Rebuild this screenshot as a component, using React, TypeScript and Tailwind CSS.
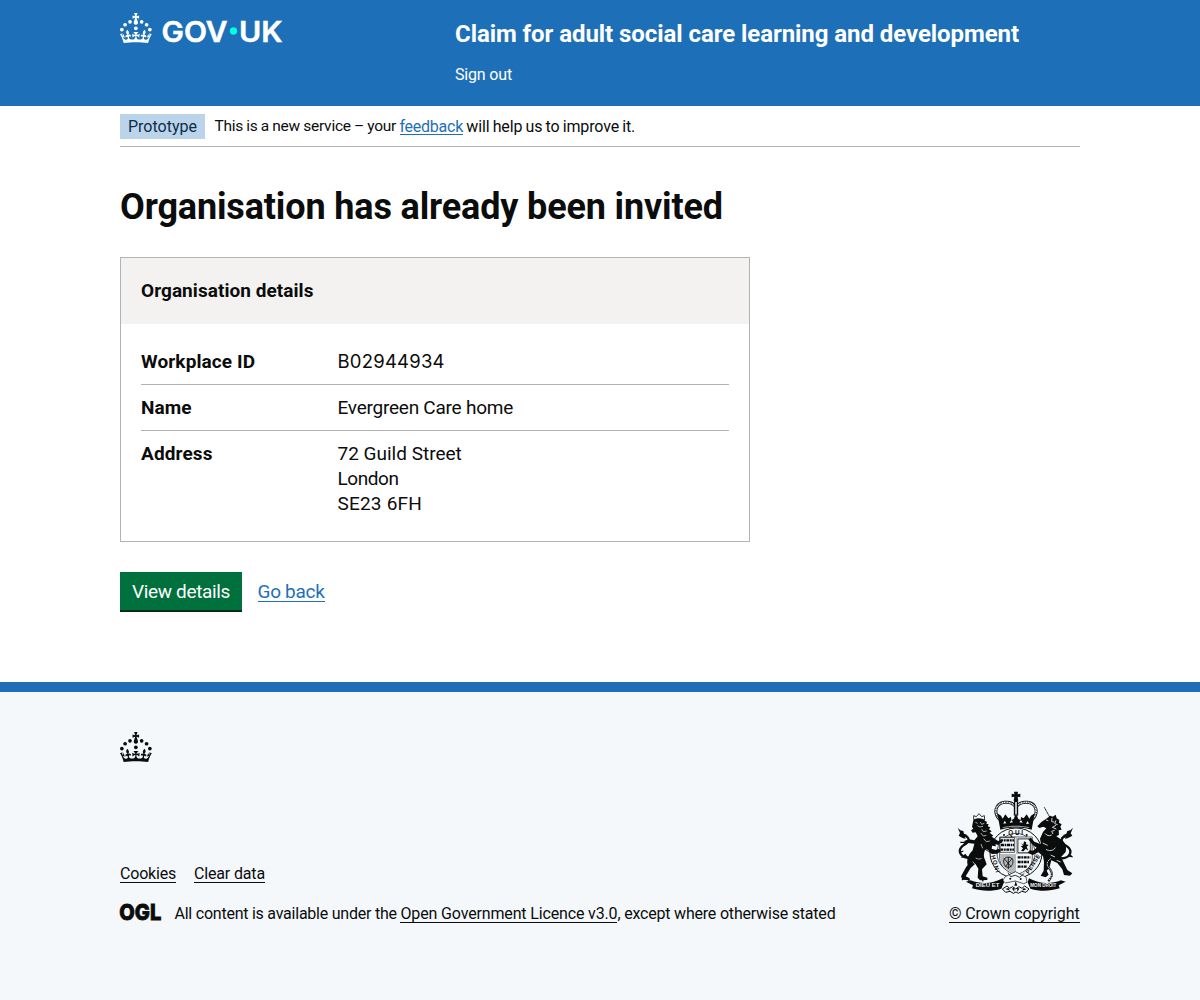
import React from 'react';

function CrownShapes() {
  return (
    <g>
      <circle cx="20" cy="17.6" r="3.7" />
      <circle cx="10.2" cy="23.5" r="3.7" />
      <circle cx="3.7" cy="33.2" r="3.7" />
      <circle cx="31.7" cy="30.6" r="3.7" />
      <circle cx="43.3" cy="17.6" r="3.7" />
      <circle cx="53.2" cy="23.5" r="3.7" />
      <circle cx="59.7" cy="33.2" r="3.7" />
      <path d="M33.1,9.8c.2-.1.3-.3.5-.5l4.6,2.4v-6.8l-4.6,1.5c-.1-.2-.3-.3-.5-.5l1.9-5.9h-6.7l1.9,5.9c-.2.1-.3.3-.5.5l-4.6-1.5v6.8l4.6-2.4c.1.2.3.3.5.5l-2.6,8c-.9,2.8,1.2,5.7,4.1,5.7h0c3,0,5.1-2.9,4.1-5.7l-2.6-8ZM37,37.9s-3.4,3.8-4.1,6.1c2.2,0,4.2-.5,6.4-2.8l-.7,8.5c-2-2.8-4.4-4.1-5.7-3.8.1,3.1.5,6.7,5.8,7.2,3.7.3,6.7-1.5,7-3.8.4-2.6-2-4.3-3.7-1.6-1.4-4.5,2.4-6.1,4.9-3.2-1.9-4.5-1.8-7.7,2.4-10.9,3,4,2.6,7.3-1.2,11.1,2.4-1.3,6.2,0,4,4.6-1.2-2.8-3.7-2.2-4.2.2-.3,1.7.7,3.7,3,4.2,1.9.3,4.7-.9,7-5.9-1.3,0-2.4.7-3.9,1.7l2.4-8c.6,2.3,1.4,3.7,2.2,4.5.6-1.6.5-2.8,0-5.3l5,1.8c-2.6,3.6-5.2,8.7-7.3,17.5-7.4-1.1-15.7-1.7-24.5-1.7h0c-8.8,0-17.1.6-24.5,1.7-2.1-8.9-4.7-13.9-7.3-17.5l5-1.8c-.5,2.5-.6,3.7,0,5.3.8-.8,1.6-2.3,2.2-4.5l2.4,8c-1.5-1-2.6-1.7-3.9-1.7,2.3,5,5.2,6.2,7,5.9,2.3-.4,3.3-2.4,3-4.2-.5-2.4-3-3.1-4.2-.2-2.2-4.6,1.6-6,4-4.6-3.7-3.7-4.2-7.1-1.2-11.1,4.2,3.2,4.3,6.4,2.4,10.9,2.5-2.8,6.3-1.3,4.9,3.2-1.8-2.7-4.1-1-3.7,1.6.3,2.3,3.3,4.1,7,3.8,5.4-.5,5.7-4.2,5.8-7.2-1.3-.2-3.7,1-5.7,3.8l-.7-8.5c2.2,2.3,4.2,2.7,6.4,2.8-.7-2.3-4.1-6.1-4.1-6.1h10.6,0Z" />
    </g>
  );
}

function GovUkLogo() {
  return (
    <svg viewBox="0 0 324 80" width="162" height="40" fill="#fff" className="block overflow-visible">
      <CrownShapes />
      <g fontFamily="Inter, sans-serif" fontWeight="600" fontSize="57" stroke="#fff" strokeWidth="1">
        <text x="83" y="57" textLength="132" lengthAdjust="spacingAndGlyphs">GOV</text>
        <text x="238" y="57" textLength="87" lengthAdjust="spacingAndGlyphs">UK</text>
      </g>
      <circle cx="227" cy="36" r="7.3" fill="#00ffe0" />
    </svg>
  );
}

function RoyalArms() {
  const ink = '#0b0c0c';
  const paper = '#f4f8fb';
  return (
    <svg viewBox="0 0 390 345" width="130" height="115" className="block self-end" fill={ink}>
      {/* crown */}
      <path d="M192 20h12l-1 8 8-2v11l-8-2 2 12h-14l2-12-8 2V26l8 2z" />
      <circle cx="198" cy="48" r="6" />
      <g fill="none" stroke={ink}>
        <path d="M152 106C127 84 137 55 164 52c15-2 28 6 34 14 6-8 19-16 34-14 27 3 37 32 12 54" strokeWidth="9" />
        <path d="M152 106C127 84 137 55 164 52c15-2 28 6 34 14 6-8 19-16 34-14 27 3 37 32 12 54" strokeWidth="4.5" stroke={paper} strokeDasharray="3.5 1.5" />
        <path d="M198 50v42" strokeWidth="13" />
        <path d="M198 52v40" strokeWidth="6" stroke={paper} strokeDasharray="4 2" />
      </g>
      <path d="M151 134l-9-49 11 7 5 9 8-13 9 12 8-4 1 9 7-3 7-17 7 17 7 3 1-9 8 4 9-12 8 13 5-9 11-7-9 49c-29-9-65-9-94 0z" />
      <g fill={paper}>
        <path d="M160 116l4-9 5 8zM179 113l5-8 5 7zM208 112l5-7 5 8zM228 116l5-8 4 9z" />
        <path d="M158 127c26-6 54-6 80 0l-1 2c-25-5-53-5-78 0z" opacity="0.65" />
      </g>
      {/* garter and shield */}
      <ellipse cx="198" cy="204" rx="78" ry="75" fill={paper} stroke={ink} strokeWidth="3" />
      <ellipse cx="198" cy="204" rx="57" ry="59" fill="none" stroke={ink} strokeWidth="2" />
      <g fontFamily="Liberation Sans, sans-serif" fontSize="19" fontWeight="700">
        <text x="175" y="151" textLength="44">QUI</text>
        <text transform="translate(123 212) rotate(74)" fontSize="18" textLength="54">HONI</text>
        <text transform="translate(236 268) rotate(-57)" fontSize="18" textLength="66">PENSE</text>
      </g>
      <circle cx="162" cy="150" r="3" /><circle cx="230" cy="150" r="3" />
      <path d="M149 156h98v63c0 24-20 42-49 51-29-9-49-27-49-51z" fill={paper} stroke={ink} strokeWidth="2" />
      <path d="M150 207h48v-50h49v50h-49v60c-29-9-48-25-48-60z" fill="#b5b9bb" />
      <path d="M204 162h37v41h-37z" fill={paper} stroke={ink} strokeWidth="2" />
      <path d="M213 174l7 5 2-10 7 3-1 6 8 2-6 5 5 12-8-6-6 8-8-1 6-8-7-6 7-2z" />
      <g fill="none" stroke={ink} strokeWidth="7" strokeDasharray="9 2 5 2">
        <path d="M151 166h41M153 180h39M151 194h41M203 217h38M203 231h34M203 245h27" />
      </g>
      <path d="M150 158h44v44h-44z" fill="none" stroke={ink} strokeWidth="2" />
      <path d="M161 228c0-15 26-16 28 0 0 11-6 19-14 19s-14-8-14-19zM162 220l22 26M187 220l-22 26M175 216v36" fill="none" stroke={ink} strokeWidth="2.5" />
      {/* lion */}
      <path d="M71 104l0-12 8 3 8-9 8 9 8-3 1 13c-10-4-22-4-33-1z" fill={paper} stroke={ink} strokeWidth="2.5" />
      <path d="M70 106c10-8 27-7 35 1l6 4-2 5 7 2-3 6 8 3-4 6 8 6-6 4 11 9-5 3 19 13 10-3 3 8-9 1-2 6-10-2 2 6-12-2-1 9 12 4 10-4 5 8-10 7-16 1-21-13c-5 14-4 22 0 30l5 14-14 15 2 21 14 4v7l-22 1-7-8 2-27-9-15-14 13-15 25 12 6-2 6-20-2-4-10 15-27 5-7c-4-16 2-31 15-44l5-20-19-2-8 7-5-5 3-9 13-4 16 3 10-12-6-12-9 1-5-7 7-5-4-6z" />
      <g fill="none" stroke={paper} strokeWidth="2">
        <path d="M76 112l7 3M91 111l4 7 8-3M82 122l8 4 9-2M95 132l5 8 10-2M92 144l8 9 9-2M101 161l8 9 12-2M93 177l5 13M109 193l8 6M77 219c7 4 12 4 18 1M68 230l7 8" />
      </g>
      <path d="M62 218c-29 2-38-17-29-30 7-11 24-12 23-24-1-9-13-14-21-12" fill="none" stroke={ink} strokeWidth="7" />
      <path d="M23 128l8 8 9 2 2 8 12 5-11 3 4 8-11-4-10-6 4-8zM32 218l14-12 8 11z" />
      <g fill="none" stroke={ink} strokeWidth="4"><path d="M40 198l-12 5M43 172l-12 0M111 177l14-8M41 280l-5 5M58 282l-2 6M99 283l-1 6" /></g>
      {/* unicorn */}
      <path d="M283 67l16 29" stroke={ink} strokeWidth="3" strokeDasharray="4 1" />
      <path d="M275 110l14-9 12-9 7 3 9-6 3 11 8 5-1 8 8 5-4 7 4 9-9 2 1 13-8 5 17 11c11 9 14 21 11 36l-13 14 5 13 13 27 15 10-7 7-18-2-5-17-15-19-18-8-6 22-8 9 6 12-9 8-15-5 9-15 1-27-3-17-14-11-17 8-15-7 6-7 10 1 11-9-14-10-11-15 8-5 10 12 20 8-3-17 9-20 10-11-9-5-12 4-6-5z" />
      <g fill="none" stroke={paper} strokeWidth="2.5">
        <path d="M288 105l7 2M306 99l-1 11 8 1M318 106l-4 10 9 3M318 121l-11 6 12 5M314 136l-9 3 4 8M285 145c5 7 13 9 20 5M278 174l15 7M288 193c9 6 22 5 28-5M302 210l13 6M320 226l12 5" />
      </g>
      <path d="M333 220c27 0 34-20 23-32-8-9-24-10-21-24 2-9 11-11 17-11" fill="none" stroke={ink} strokeWidth="7" />
      <path d="M369 128l-8 8-9 2-3 8-11 5 10 3-3 8 11-4 11-6-5-7zM343 178l-10-6 1 14zM360 207l10 10-13-1z" />
      <path d="M302 221c-12 8-14 18-5 28s13 20 5 30l-7 10" fill="none" stroke={ink} strokeWidth="6" />
      <path d="M302 221c-12 8-14 18-5 28s13 20 5 30l-7 10" fill="none" stroke={paper} strokeWidth="3" strokeDasharray="4 3" />
      {/* compartment */}
      <path d="M166 275l30-15 32 16 3 16-10 4-25-8-30 6-8-8z" fill={paper} stroke={ink} strokeWidth="2" />
      <path d="M174 263l8 12 14-4 13 6 14-12" fill="none" stroke={ink} strokeWidth="2.5" />
      <circle cx="181" cy="281" r="3" /><circle cx="212" cy="282" r="3" />
      <path d="M48 290l14-4c32 12 65 11 96-6l4 12-8 19c-29 9-58 8-88-1l3-9-21-11zM347 290l-14-4c-32 12-65 11-96-6l-4 12 8 19c29 9 58 8 88-1l-3-9 21-11z" />
      <g fill={paper} fontFamily="Liberation Sans, sans-serif" fontWeight="700" fontSize="17">
        <text x="77" y="307" textLength="71" lengthAdjust="spacingAndGlyphs">DIEU ET</text>
        <text x="241" y="307" textLength="78" lengthAdjust="spacingAndGlyphs">MON DROIT</text>
      </g>
      <path d="M157 312l14-9 8 7 9-5 9 7 10-7 9 5 8-7 13 9-9 10-13-3-10 6-7-4-8 4-10-6-13 3z" fill={paper} stroke={ink} strokeWidth="3" />
      <path d="M166 312l9-3 5 8zM186 311l7-4v13zM201 307l7 4-6 9zM216 317l5-8 9 4zM197 288l5 14h-9z" />
    </svg>
  );
}

function SummaryRow({ label, last, children }: { label: string; last?: boolean; children: React.ReactNode }) {
  return (
    <div className={last ? 'flex pt-2.5 pb-2.5' : 'flex border-b border-[#b1b4b6] py-2.5'}>
      <dt className="w-[196.5px] shrink-0 font-bold tracking-[0.006em]">{label}</dt>
      <dd>{children}</dd>
    </div>
  );
}

const footLink = 'border-b border-[#0b0c0c] leading-[17px] inline-block';

export default function App() {
  return (
    <div className="flex min-h-[1000px] flex-col bg-white font-['Roboto',sans-serif] text-[#0b0c0c] [font-variant-ligatures:none]">
      <header className="h-[106px] bg-[#1d70b8] text-white">
        <div className="mx-auto flex w-[960px] pt-[13px]">
          <div className="w-[335px]">
            <GovUkLogo />
          </div>
          <div className="pt-[6px]">
            <div className="whitespace-nowrap text-2xl leading-[30px] font-bold tracking-[-0.0028em]">Claim for adult social care learning and development</div>
            <div className="mt-4 text-base leading-5 tracking-[-0.0106em]">Sign out</div>
          </div>
        </div>
      </header>

      <main className="mx-auto w-[960px] grow">
        <div className="flex h-[41px] border-b border-[#b1b4b6] pt-2 text-base">
          <strong className="h-[25px] w-[85px] bg-[#bbd4ea] pl-2 leading-[25px] font-normal text-[#0c2d4a]">Prototype</strong>
          <p className="ml-[9.5px] flex whitespace-pre leading-[25px]">
            <span className="w-[185px] text-[15.5px] tracking-[-0.015em] [word-spacing:-0.4px]">This is a new service – your </span>
            <a className="mt-[3px] h-[18px] w-[63.5px] border-b border-[#1d70b8] leading-[19px] tracking-[-0.0159em] text-[#1d70b8]">feedback</a>
            <span className="tracking-[-0.01em] [word-spacing:-0.5px]"> will help us to improve it.</span>
          </p>
        </div>

        <h1 className="mt-10 text-4xl leading-10 font-bold tracking-[-0.004em]">Organisation has already been invited</h1>

        <section className="mt-[30px] h-[285px] w-[630px] border border-[#b1b4b6] text-[19px] leading-[25px]">
          <h2 className="h-[66px] bg-[#f3f2f1] px-5 pt-5 font-bold tracking-[0.0028em]">Organisation details</h2>
          <dl className="px-5 pt-[15px]">
            <SummaryRow label="Workplace ID">
              <span className="font-['Inter'] text-[18.5px] tracking-[0.012em]">B02944934</span>
            </SummaryRow>
            <SummaryRow label="Name">
              <span className="tracking-[-0.0126em]">Evergreen Care home</span>
            </SummaryRow>
            <SummaryRow label="Address" last>
              72 Guild Street
              <br />
              <span className="tracking-[-0.0229em]">London</span>
              <br />
              <span className="tracking-[0.0106em]">SE23 6FH</span>
            </SummaryRow>
          </dl>
        </section>

        <div className="mt-[30px] flex text-[19px]">
          <button className="h-10 w-[122px] border-b-2 border-[#002d18] bg-[#00703c] pt-px leading-[37px] tracking-[-0.0183em] text-white">View details</button>
          <a className="mt-[9px] ml-[15.5px] h-[21px] border-b border-[#1d70b8] leading-[22px] tracking-[-0.0156em] text-[#1d70b8]">Go back</a>
        </div>
      </main>

      <footer className="h-[318px] border-t-10 border-[#1d70b8] bg-[#f4f8fb] pt-10 text-base">
        <div className="mx-auto w-[960px]">
          <svg viewBox="0 0 64 60" width="32" height="30" fill="#0b0c0c" className="block">
            <CrownShapes />
          </svg>
          <div className="mt-[23px] flex items-end justify-between">
            <div>
              <div className="flex gap-[18px]">
                <a className={footLink + ' tracking-[-0.0126em]'}>Cookies</a>
                <a className={footLink + ' tracking-[-0.0097em]'}>Clear data</a>
              </div>
              <div className="mt-[21px] flex h-5 whitespace-pre leading-5">
                <svg viewBox="0 0 41 17" width="41" height="17" className="mr-[13.5px] block overflow-visible" fill="#0b0c0c">
                  <text x="-0.7" y="16" fontFamily="Inter, sans-serif" fontWeight="800" fontSize="21.5" stroke="#0b0c0c" strokeWidth="0.8" textLength="42" lengthAdjust="spacingAndGlyphs">OGL</text>
                </svg>
                <span className="tracking-[-0.0147em]">All content is available under the </span>
                <a className="h-[19px] border-b border-[#0b0c0c] tracking-[-0.0092em]">Open Government Licence v3.0</a>
                <span className="tracking-[-0.0126em]">, except where otherwise stated</span>
              </div>
            </div>
            <div className="flex w-[131px] flex-col">
              <RoyalArms />
              <a className="mt-[4px] mb-[1px] h-[19px] whitespace-nowrap border-b border-[#0b0c0c] leading-5 tracking-[-0.0073em]">© Crown copyright</a>
            </div>
          </div>
        </div>
      </footer>
    </div>
  );
}
